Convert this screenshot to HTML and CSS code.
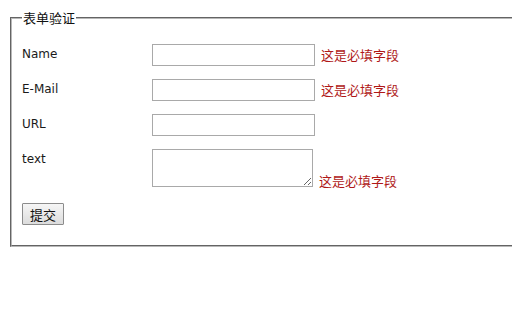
FILE: index.html
```html
<!DOCTYPE html>
<html>
<head>
<meta charset="utf-8">
<link rel="stylesheet" href="styles.css">
</head>
<body>
<form class="form">
  <fieldset class="box">
    <legend class="box-title">表单验证</legend>
    <div class="row">
      <label class="lbl">Name</label>
      <div class="field"><input class="inp" type="text"><span class="err">这是必填字段</span></div>
    </div>
    <div class="row">
      <label class="lbl">E-Mail</label>
      <div class="field"><input class="inp" type="text"><span class="err">这是必填字段</span></div>
    </div>
    <div class="row">
      <label class="lbl">URL</label>
      <div class="field"><input class="inp" type="text"></div>
    </div>
    <div class="row row-area">
      <label class="lbl">text</label>
      <div class="field field-area"><textarea class="area"></textarea><span class="err">这是必填字段</span></div>
    </div>
    <div class="actions">
      <button class="btn" type="button">提交</button>
    </div>
  </fieldset>
</form>
</body>
</html>
```
FILE: styles.css
```css
body {
  margin: 8px 0 8px 8px;
  background: #fff;
  color: #222;
  font-family: "DejaVu Sans", Verdana, "Noto Sans CJK SC", sans-serif;
  font-size: 12px;
}
.box {
  margin: 0 0 0 2px;
  padding: 0 10px 20px 10px;
  border: 2px groove #b8b8b8;
  border-right: none;
}
.box-title {
  padding: 0 1px;
  margin-left: 0;
  font-family: "Noto Sans CJK SC", sans-serif;
  font-size: 13px;
  line-height: 20px;
  color: #111;
}
.row {
  display: flex;
  align-items: flex-start;
  margin-bottom: 13px;
}
.row:first-of-type {
  margin-top: 16px;
}
.lbl {
  width: 130px;
  flex: none;
  line-height: 20px;
  color: #1a1a1a;
}
.field {
  display: flex;
  align-items: center;
}
.field-area {
  align-items: flex-end;
}
.inp {
  box-sizing: border-box;
  width: 163px;
  height: 22px;
  margin: 0;
  padding: 1px 2px;
  border: 1px solid #a9a9a9;
  font-size: 12px;
}
.area {
  box-sizing: border-box;
  width: 161px;
  height: 38px;
  margin: 0;
  padding: 2px;
  border: 1px solid #a9a9a9;
  font-size: 12px;
  resize: both;
}
.err {
  margin-left: 6px;
  font-family: "Noto Sans CJK SC", sans-serif;
  font-size: 13px;
  line-height: 16px;
  color: #b01818;
}
.field-area .err {
  margin-bottom: -2px;
}
.row-area {
  margin-bottom: 16px;
}
.actions {
  display: flex;
}
.btn {
  box-sizing: border-box;
  width: 42px;
  height: 22px;
  padding: 0;
  margin: 0;
  border: 1px solid #8c8c8c;
  border-radius: 1px;
  background: linear-gradient(#f6f6f6, #dcdcdc);
  font-family: "Noto Sans CJK SC", sans-serif;
  font-size: 13px;
  color: #111;
}
```
